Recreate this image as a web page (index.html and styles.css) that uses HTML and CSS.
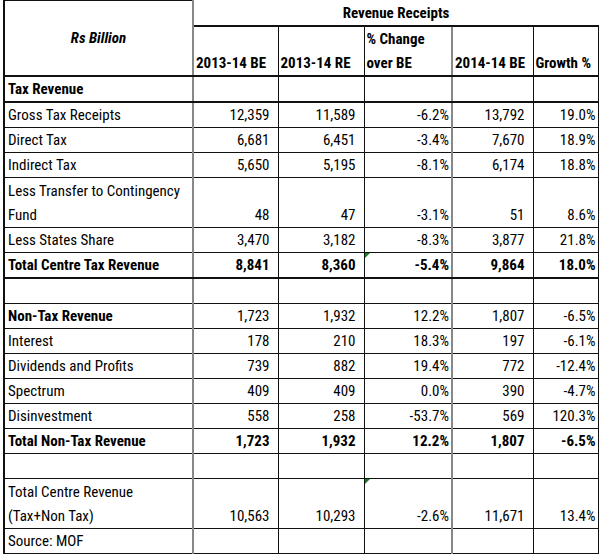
FILE: index.html
```html
<!DOCTYPE html>
<html>
<head>
<meta charset="utf-8">
<link rel="stylesheet" href="styles.css">
</head>
<body>
<table class="sheet">
  <colgroup>
    <col class="c-label">
    <col class="c-a">
    <col class="c-b">
    <col class="c-c">
    <col class="c-d">
    <col class="c-e">
  </colgroup>
  <tr class="h1">
    <td class="rs" rowspan="2">Rs Billion</td>
    <td class="rr" colspan="5">Revenue Receipts</td>
  </tr>
  <tr class="h2">
    <td class="hd">2013-14 BE</td>
    <td class="hd">2013-14 RE</td>
    <td class="hd">% Change<br>over BE</td>
    <td class="hd">2014-14 BE</td>
    <td class="hd last">Growth %</td>
  </tr>
  <tr class="thick">
    <td class="lbl b">Tax Revenue</td>
    <td class="n"></td><td class="n"></td><td class="p"></td><td class="n g"></td><td class="p"></td>
  </tr>
  <tr>
    <td class="lbl">Gross Tax Receipts</td>
    <td class="n">12,359</td><td class="n">11,589</td><td class="p">-6.2%</td><td class="n g">13,792</td><td class="p">19.0%</td>
  </tr>
  <tr>
    <td class="lbl">Direct Tax</td>
    <td class="n">6,681</td><td class="n">6,451</td><td class="p">-3.4%</td><td class="n g">7,670</td><td class="p">18.9%</td>
  </tr>
  <tr>
    <td class="lbl">Indirect Tax</td>
    <td class="n">5,650</td><td class="n">5,195</td><td class="p">-8.1%</td><td class="n g">6,174</td><td class="p">18.8%</td>
  </tr>
  <tr class="dbl">
    <td class="lbl">Less Transfer to Contingency<br>Fund</td>
    <td class="n">48</td><td class="n">47</td><td class="p">-3.1%</td><td class="n g">51</td><td class="p">8.6%</td>
  </tr>
  <tr>
    <td class="lbl">Less States Share</td>
    <td class="n">3,470</td><td class="n">3,182</td><td class="p">-8.3%</td><td class="n g">3,877</td><td class="p">21.8%</td>
  </tr>
  <tr class="thick b">
    <td class="lbl">Total Centre Tax Revenue</td>
    <td class="n">8,841</td><td class="n">8,360</td><td class="p flag">-5.4%</td><td class="n g">9,864</td><td class="p">18.0%</td>
  </tr>
  <tr>
    <td class="lbl"></td><td class="n"></td><td class="n"></td><td class="p"></td><td class="n g"></td><td class="p"></td>
  </tr>
  <tr>
    <td class="lbl b">Non-Tax Revenue</td>
    <td class="n">1,723</td><td class="n">1,932</td><td class="p">12.2%</td><td class="n g">1,807</td><td class="p">-6.5%</td>
  </tr>
  <tr>
    <td class="lbl">Interest</td>
    <td class="n">178</td><td class="n">210</td><td class="p">18.3%</td><td class="n g">197</td><td class="p">-6.1%</td>
  </tr>
  <tr>
    <td class="lbl">Dividends and Profits</td>
    <td class="n">739</td><td class="n">882</td><td class="p">19.4%</td><td class="n g">772</td><td class="p">-12.4%</td>
  </tr>
  <tr>
    <td class="lbl">Spectrum</td>
    <td class="n">409</td><td class="n">409</td><td class="p">0.0%</td><td class="n g">390</td><td class="p">-4.7%</td>
  </tr>
  <tr>
    <td class="lbl">Disinvestment</td>
    <td class="n">558</td><td class="n">258</td><td class="p">-53.7%</td><td class="n g">569</td><td class="p">120.3%</td>
  </tr>
  <tr class="b">
    <td class="lbl">Total Non-Tax Revenue</td>
    <td class="n">1,723</td><td class="n">1,932</td><td class="p">12.2%</td><td class="n g">1,807</td><td class="p">-6.5%</td>
  </tr>
  <tr>
    <td class="lbl"></td><td class="n"></td><td class="n"></td><td class="p"></td><td class="n g"></td><td class="p"></td>
  </tr>
  <tr class="dbl">
    <td class="lbl">Total Centre Revenue<br>(Tax+Non Tax)</td>
    <td class="n">10,563</td><td class="n">10,293</td><td class="p flag">-2.6%</td><td class="n g">11,671</td><td class="p">13.4%</td>
  </tr>
  <tr>
    <td class="lbl">Source: MOF</td>
    <td class="n"></td><td class="n"></td><td class="p"></td><td class="n g"></td><td class="p"></td>
  </tr>
</table>
</body>
</html>
```

FILE: styles.css
```css
html, body {
  margin: 0;
  padding: 0;
  background: #ffffff;
}

.sheet {
  margin: 0 0 0 3px;
  border-collapse: collapse;
  table-layout: fixed;
  width: 594px;
  font-family: "Roboto Condensed", "DejaVu Sans Condensed", sans-serif;
  font-size: 15px;
  color: #000;
}

.c-label { width: 189px; }
.c-a { width: 85px; }
.c-b { width: 86px; }
.c-c { width: 88px; }
.c-d { width: 81px; }
.c-e { width: 65px; }

.sheet td {
  border: 1px solid #111;
  height: 24px;
  line-height: 24px;
  padding: 0 3px 0 3px;
  text-align: right;
  vertical-align: bottom;
  white-space: nowrap;
  position: relative;
}

.sheet td.n {
  padding-right: 8px;
}

.sheet td.p {
  padding-right: 2px;
}

.sheet td.lbl {
  text-align: left;
  border-left: 2px solid #111;
  border-right: 2px solid #888;
}

.sheet td.g {
  border-left: 2px solid #888;
}

.sheet tr.dbl td {
  height: 49px;
}

.sheet tr.thick td {
  border-bottom: 2px solid #111;
}

.sheet tr.h1 td {
  height: 24px;
}

.sheet td.rs {
  border: 1px solid #111;
  border-left: 2px solid #111;
  border-right: 2px solid #888;
  border-bottom: 2px solid #111;
  text-align: center;
  vertical-align: middle;
  font-weight: bold;
  font-style: italic;
}

.sheet td.rr {
  border-top: 0;
  border-right: 0;
  border-left: 2px solid #888;
  border-bottom: 2px solid #111;
  text-align: center;
  font-weight: bold;
}

.sheet tr.h2 td.hd {
  height: 48px;
  text-align: left;
  font-weight: bold;
  border-bottom: 2px solid #111;
  padding-left: 2px;
}

.sheet tr.h2 td.hd:nth-child(4) {
  border-left: 2px solid #888;
}

.b td, td.b {
  font-weight: bold;
}

.sheet td.flag::before {
  content: "";
  position: absolute;
  left: 0;
  top: 0;
  border-top: 5px solid #1e7a1e;
  border-right: 5px solid transparent;
}
```
